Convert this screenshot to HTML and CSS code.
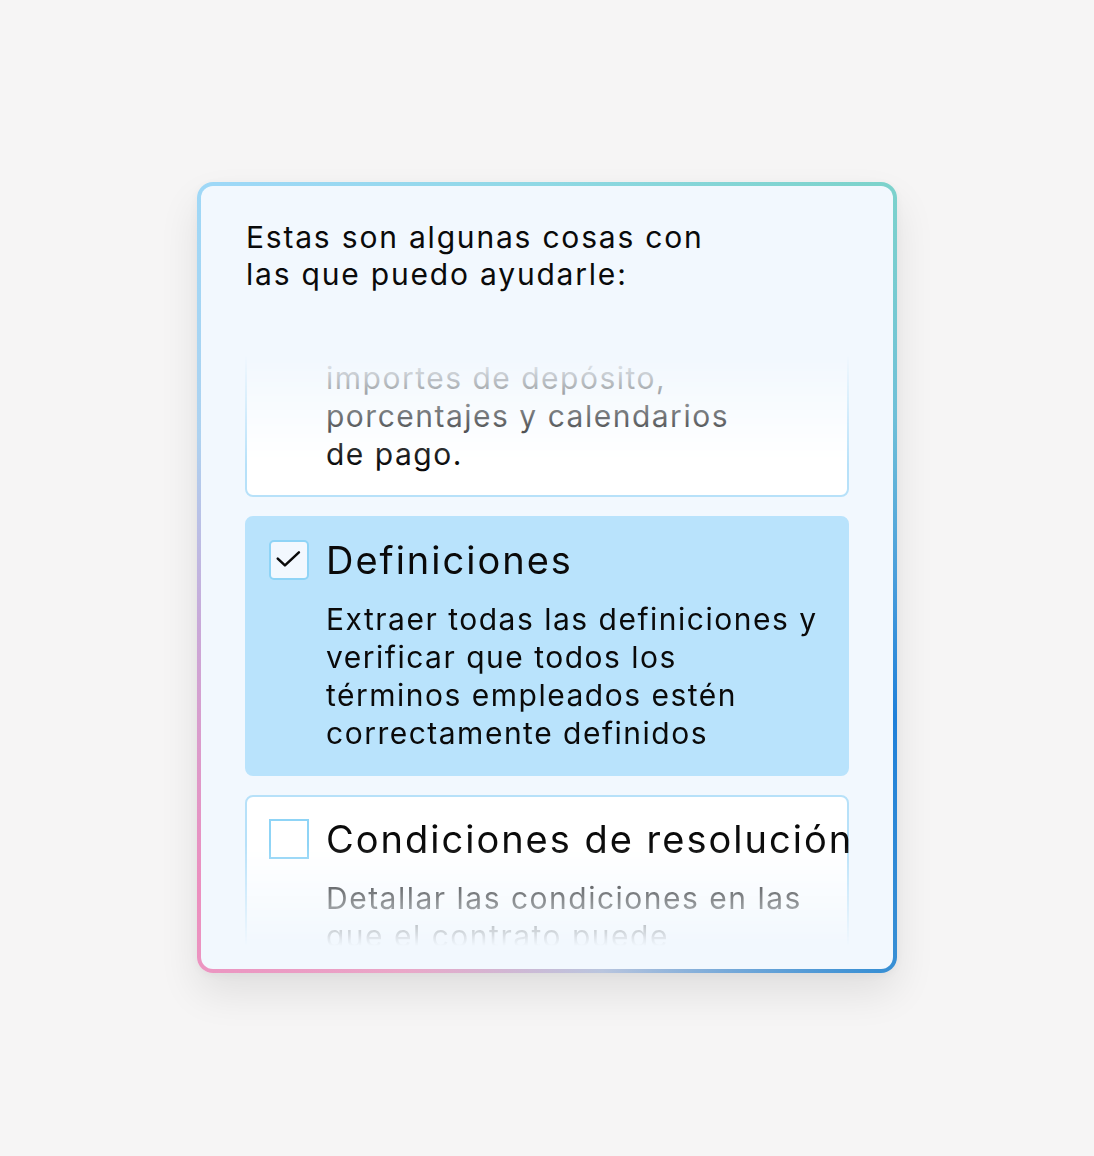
FILE: index.html
```html
<!DOCTYPE html>
<html lang="es">
<head>
<meta charset="utf-8">
<title>Asistente</title>
<link rel="stylesheet" href="styles.css">
</head>
<body>
<main class="card">
  <p class="intro">Estas son algunas cosas con<br>las que puedo ayudarle:</p>
  <div class="list" id="list">
    <div class="items">
      <div class="item">
        <span class="spacer" aria-hidden="true"></span>
        <div class="body">
          <div class="desc">importes de depósito,<br>porcentajes y calendarios<br>de pago.</div>
        </div>
      </div>
      <div class="item selected" id="sel">
        <span class="box checked">
          <svg viewBox="0 0 40 40" width="36" height="36"><path d="M7.5 18.5 L15.5 26 L31 11.5" fill="none" stroke="#0a0a0a" stroke-width="2.8" stroke-linecap="round" stroke-linejoin="round"/></svg>
        </span>
        <div class="body">
          <div class="title">Definiciones</div>
          <div class="desc">Extraer todas las definiciones y<br>verificar que todos los<br>términos empleados estén<br>correctamente definidos</div>
        </div>
      </div>
      <div class="item">
        <span class="box"></span>
        <div class="body">
          <div class="title">Condiciones de resolución</div>
          <div class="desc">Detallar las condiciones en las<br>que el contrato puede</div>
        </div>
      </div>
    </div>
  </div>
</main>
<script src="script.js"></script>
</body>
</html>
```
FILE: styles.css
```css
html, body {
  margin: 0;
  padding: 0;
}
body {
  background: #f6f5f5;
  height: 100vh;
  display: flex;
  align-items: center;
  justify-content: center;
  font-family: "Inter", "Noto Sans", sans-serif;
  color: #0a0a0a;
}
.card {
  box-sizing: border-box;
  width: 700px;
  height: 791px;
  margin-top: -1px;
  border: 4px solid transparent;
  border-radius: 16px;
  background:
    linear-gradient(#f2f8fe, #f2f8fe) padding-box,
    conic-gradient(from 0deg,
      #8fd8e4 0deg, #7dd3cc 40deg, #6fc0d8 65deg, #4a9edb 90deg,
      #1f80d9 112deg, #3a90d4 140deg, #b9c5de 172deg, #eaa7c8 200deg,
      #ec8fbf 228deg, #c9a8d8 262deg, #aed2f0 292deg, #9ed8f7 320deg,
      #8fd8e4 360deg) border-box;
  box-shadow: 0 20px 40px rgba(0, 0, 0, 0.09), 0 2px 8px rgba(0, 0, 0, 0.04);
  padding: 33px 0 23px;
  display: flex;
  flex-direction: column;
}
.intro {
  margin: 0 44px 52px 45px;
  font-size: 30px;
  line-height: 37px;
  font-weight: 400;
  letter-spacing: 1.8px;
}
.list {
  height: 601px;
  overflow: hidden;
  -webkit-mask-image: linear-gradient(to bottom, transparent 0, transparent 10px, #000 120px, #000 500px, transparent 601px);
  mask-image: linear-gradient(to bottom, transparent 0, transparent 10px, #000 120px, #000 500px, transparent 601px);
}
.items {
  display: flex;
  flex-direction: column;
  gap: 19px;
  padding: 0 44px;
}
.item {
  display: flex;
  gap: 17px;
  align-items: flex-start;
  padding: 22px;
  border: 2px solid #b7e1f9;
  border-radius: 8px;
  background: #ffffff;
}
.item.selected {
  background: #b9e3fc;
  border-color: #b9e3fc;
}
.spacer {
  flex: 0 0 40px;
}
.box {
  flex: 0 0 auto;
  box-sizing: border-box;
  width: 40px;
  height: 40px;
  border: 2px solid #8fd4f6;
  background: #ffffff;
  display: flex;
  align-items: center;
  justify-content: center;
}
.box.checked {
  background: #f2f8fe;
  border-radius: 5px;
}
.body {
  flex: 1 1 auto;
  min-width: 0;
}
.title {
  font-size: 38px;
  line-height: 40px;
  letter-spacing: 2px;
  white-space: nowrap;
  margin-bottom: 20px;
}
.desc {
  font-size: 30px;
  line-height: 38px;
  letter-spacing: 1.5px;
  white-space: nowrap;
}
```
FILE: script.js
```js
var list = document.getElementById('list');
var sel = document.getElementById('sel');
list.scrollTop = sel.offsetTop - list.offsetTop - 171;
```
